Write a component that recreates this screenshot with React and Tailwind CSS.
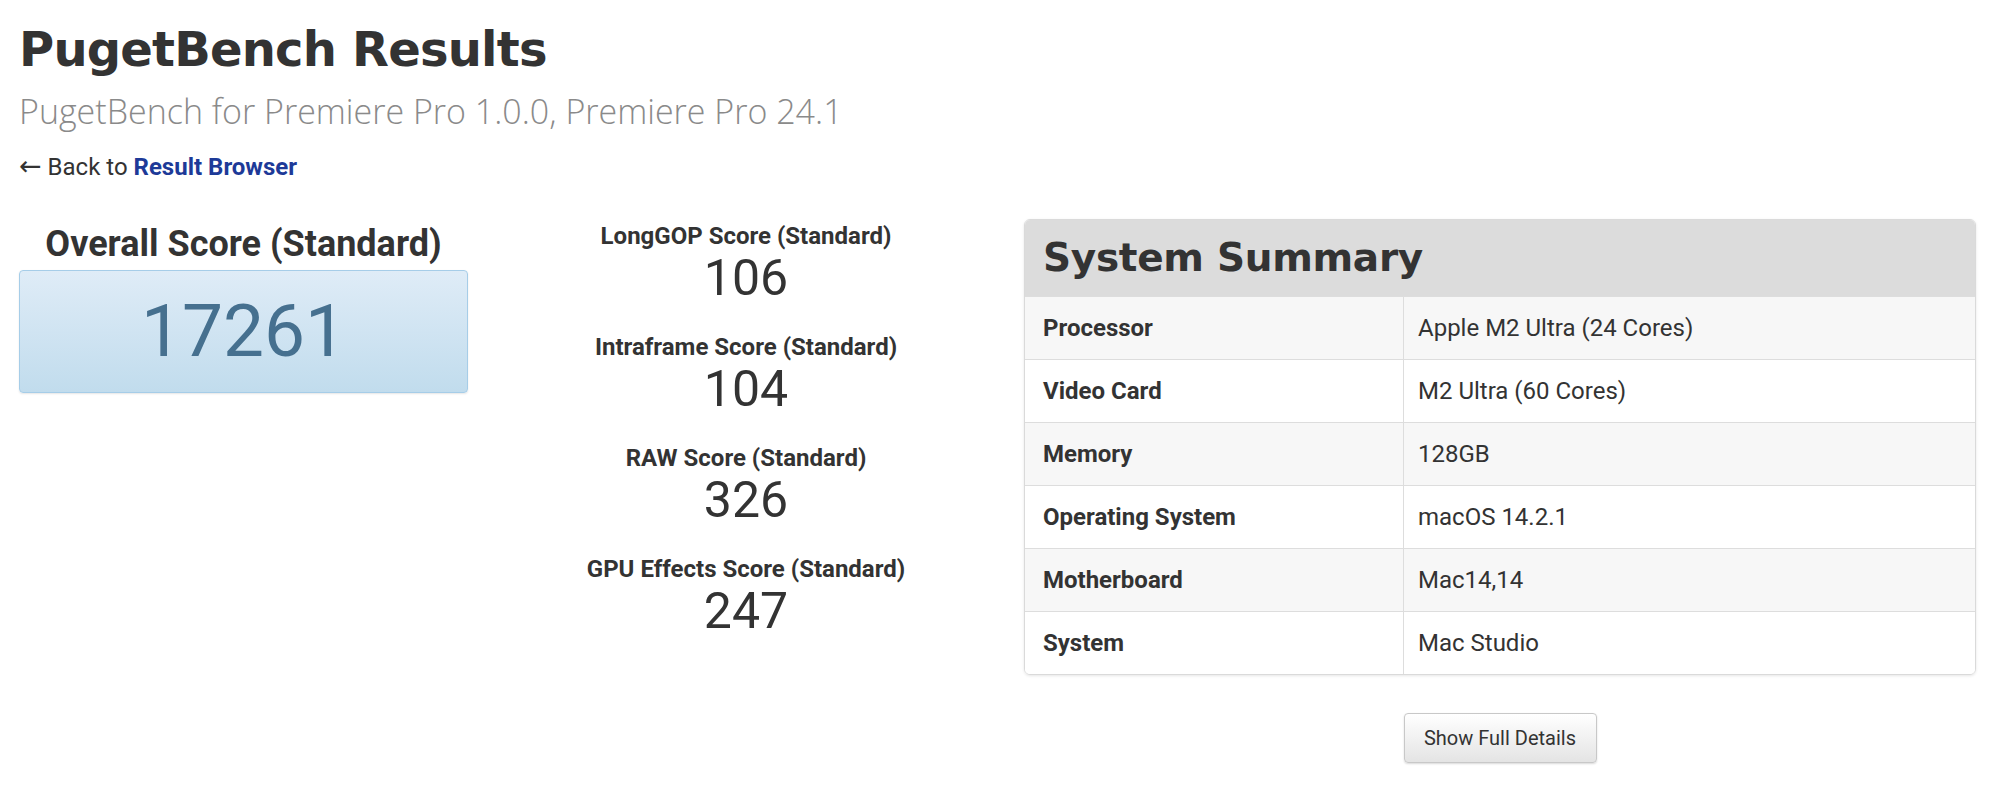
const scores = [
  { label: "LongGOP Score (Standard)", value: "106" },
  { label: "Intraframe Score (Standard)", value: "104" },
  { label: "RAW Score (Standard)", value: "326" },
  { label: "GPU Effects Score (Standard)", value: "247" },
]

const specs = [
  ["Processor", "Apple M2 Ultra (24 Cores)"],
  ["Video Card", "M2 Ultra (60 Cores)"],
  ["Memory", "128GB"],
  ["Operating System", "macOS 14.2.1"],
  ["Motherboard", "Mac14,14"],
  ["System", "Mac Studio"],
]

export default function App() {
  return (
    <div className="min-h-screen bg-white pl-[19px] pr-[24px] pt-[19px] text-[#333] font-['Roboto',sans-serif]">
      <h1 className="font-['DejaVu_Sans',sans-serif] text-[48px] font-bold leading-[60px] tracking-[-0.8px] text-[#333]">
        PugetBench Results
      </h1>
      <p className="mt-[10px] font-['Open_Sans',sans-serif] text-[34px] font-light leading-[44px] text-[#8a8a8a]">
        PugetBench for Premiere Pro 1.0.0, Premiere Pro 24.1
      </p>
      <p className="mt-[18px] h-[32px] text-[24px] leading-[32px]">
        <span className="font-['DejaVu_Sans',sans-serif] text-[27px] leading-none">←</span> Back to{" "}
        <a href="#" className="font-bold text-[#1d3a98]">Result Browser</a>
      </p>

      <div className="mt-[36px] flex">
        {/* overall */}
        <div className="w-[449px] pt-[3px]">
          <h2 className="text-center text-[36px] font-bold leading-[44px]">Overall Score (Standard)</h2>
          <div className="mt-[4px] flex h-[123px] items-center justify-center rounded-[4px] border border-[#a6cde8] bg-gradient-to-b from-[#dfecf7] to-[#c1dced] shadow-[0_1px_2px_rgba(0,0,0,0.1)]">
            <span className="text-[73px] leading-none text-[#46708f]">17261</span>
          </div>
        </div>

        {/* sub scores */}
        <div className="flex flex-1 flex-col items-center pt-[3px]">
          {scores.map((s) => (
            <div key={s.label} className="mb-[27px] text-center">
              <div className="text-[24px] font-bold leading-[28px]">{s.label}</div>
              <div className="text-[50px] leading-[56px]">{s.value}</div>
            </div>
          ))}
        </div>

        {/* system summary */}
        <div className="w-[952px]">
          <div className="overflow-hidden rounded-[6px] border border-[#dadada] shadow-[0_1px_3px_rgba(0,0,0,0.1)]">
            <div className="flex h-[76px] items-center bg-[#dcdcdc] px-[18px]">
              <h3 className="font-['DejaVu_Sans',sans-serif] text-[39px] font-bold tracking-[-0.3px] text-[#333]">
                System Summary
              </h3>
            </div>
            {specs.map(([k, v], i) => (
              <div key={k} className={`flex h-[63px] items-center border-t border-[#dddddd] text-[24px] ${i % 2 === 0 ? "bg-[#f7f7f7]" : "bg-white"}`}>
                <div className="flex h-full w-[379px] items-center border-r border-[#dddddd] pl-[18px] font-bold">{k}</div>
                <div className="pl-[14px]">{v}</div>
              </div>
            ))}
          </div>
          <div className="mt-[38px] flex justify-center">
            <button className="h-[50px] w-[193px] rounded-[4px] border border-[#c8c8c8] bg-gradient-to-b from-white to-[#e4e4e4] text-[20px] text-[#333] shadow-[0_1px_2px_rgba(0,0,0,0.15)]">
              Show Full Details
            </button>
          </div>
        </div>
      </div>
    </div>
  )
}
